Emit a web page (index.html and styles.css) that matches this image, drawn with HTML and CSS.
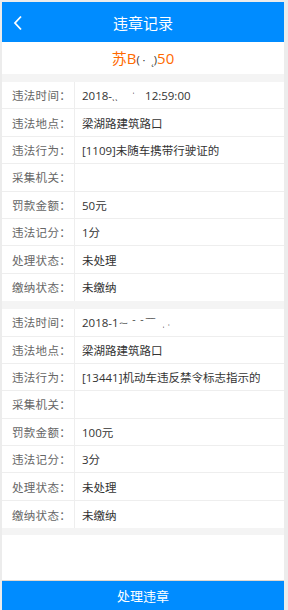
FILE: index.html
```html
<!DOCTYPE html>
<html lang="zh-CN">

<head>
    <meta charset="UTF-8">
    <meta name="viewport" content="width=device-width, initial-scale=1.0">
    <title>违章记录</title>
    <link rel="stylesheet" href="styles.css">
</head>

<body>
    <div class="page">
        <header class="header">
            <a class="back" href="#">
                <svg width="10" height="16" viewBox="0 0 10 16">
                    <polyline points="8,1.5 2,8 8,14.5" fill="none" stroke="#fff" stroke-width="1.8" />
                </svg>
            </a>
            <h1>违章记录</h1>
        </header>

        <div class="plate">苏B<span class="mask">( ·  ˛)</span>50</div>

        <div class="gap"></div>

        <div class="record">
            <div class="row"><span class="label">违法时间：</span><span class="value">2018-<span class="mask">ˎˎ      ˈ   </span> 12:59:00</span></div>
            <div class="row"><span class="label">违法地点：</span><span class="value">梁湖路建筑路口</span></div>
            <div class="row"><span class="label">违法行为：</span><span class="value">[1109]未随车携带行驶证的</span></div>
            <div class="row"><span class="label">采集机关：</span><span class="value"></span></div>
            <div class="row"><span class="label">罚款金额：</span><span class="value">50元</span></div>
            <div class="row"><span class="label">违法记分：</span><span class="value">1分</span></div>
            <div class="row"><span class="label">处理状态：</span><span class="value">未处理</span></div>
            <div class="row"><span class="label">缴纳状态：</span><span class="value">未缴纳</span></div>
        </div>

        <div class="gap"></div>

        <div class="record">
            <div class="row"><span class="label">违法时间：</span><span class="value">2018-1<span class="mask">⁓  ˉ  ˉ ‾‾‾   ˌ ˓</span></span></div>
            <div class="row"><span class="label">违法地点：</span><span class="value">梁湖路建筑路口</span></div>
            <div class="row"><span class="label">违法行为：</span><span class="value">[13441]机动车违反禁令标志指示的</span></div>
            <div class="row"><span class="label">采集机关：</span><span class="value"></span></div>
            <div class="row"><span class="label">罚款金额：</span><span class="value">100元</span></div>
            <div class="row"><span class="label">违法记分：</span><span class="value">3分</span></div>
            <div class="row"><span class="label">处理状态：</span><span class="value">未处理</span></div>
            <div class="row"><span class="label">缴纳状态：</span><span class="value">未缴纳</span></div>
        </div>

        <div class="gap gap-end"></div>

        <div class="spacer"></div>

        <button class="submit">处理违章</button>
    </div>
</body>

</html>
```

FILE: styles.css
```css
* {
    box-sizing: border-box;
}

body {
    margin: 0;
    padding: 2px 4px 0 2px;
    background: #ececec;
    font-family: "Open Sans", "Noto Sans CJK SC", sans-serif;
}

.page {
    display: flex;
    flex-direction: column;
    height: 608px;
    background: #fff;
}

.header {
    display: flex;
    align-items: center;
    justify-content: center;
    position: relative;
    height: 40px;
    background: #008cff;
    flex-shrink: 0;
}

.header h1 {
    margin: 0;
    color: #fff;
    font-size: 15px;
    font-weight: normal;
}

.back {
    position: absolute;
    left: 11px;
    top: 13px;
    display: flex;
}

.plate {
    height: 32px;
    line-height: 32px;
    text-align: center;
    color: #ff6a00;
    font-size: 15px;
    flex-shrink: 0;
    white-space: pre;
}

.plate .mask {
    color: #333;
    font-size: 11px;
}

.gap {
    height: 8px;
    background: #f4f4f4;
    flex-shrink: 0;
}

.gap-end {
    height: 7px;
}

.record {
    flex-shrink: 0;
}

.row {
    display: flex;
    height: 27.4px;
    border-bottom: 1px solid #eeeeee;
    font-size: 11.5px;
}

.row:last-child {
    border-bottom: none;
}

.label {
    width: 73px;
    padding-left: 10px;
    border-right: 1px solid #eeeeee;
    color: #666;
    display: flex;
    align-items: center;
    white-space: nowrap;
    letter-spacing: 0.3px;
}

.value {
    padding-left: 7px;
    color: #333;
    display: flex;
    align-items: center;
    white-space: pre;
}

.value .mask {
    color: #111;
    font-size: 9px;
}

.spacer {
    flex: 1;
}

.submit {
    height: 30px;
    border: none;
    border-top: 1px solid #e0d8d0;
    background: #008cff;
    color: #fff;
    font-family: inherit;
    font-size: 13px;
    flex-shrink: 0;
    cursor: pointer;
}
```
